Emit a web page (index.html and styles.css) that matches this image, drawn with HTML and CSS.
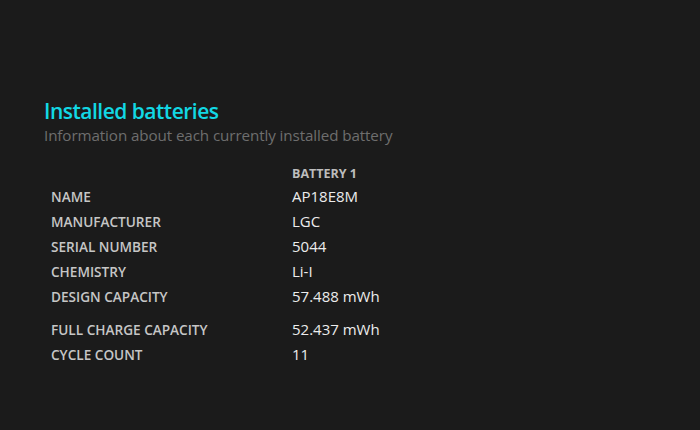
FILE: index.html
```html
<!DOCTYPE html>
<html>
<head>
<meta charset="utf-8">
<link rel="stylesheet" href="styles.css">
</head>
<body>
<main class="page">
  <h1 class="title">Installed batteries</h1>
  <p class="subtitle">Information about each currently installed battery</p>
  <table class="info">
    <thead>
      <tr class="head-row"><th class="corner"></th><th class="col-head">BATTERY 1</th></tr>
    </thead>
    <tbody>
      <tr><td class="label">NAME</td><td class="value">AP18E8M</td></tr>
      <tr><td class="label">MANUFACTURER</td><td class="value">LGC</td></tr>
      <tr><td class="label">SERIAL NUMBER</td><td class="value">5044</td></tr>
      <tr><td class="label">CHEMISTRY</td><td class="value">Li-I</td></tr>
      <tr><td class="label">DESIGN CAPACITY</td><td class="value">57.488 mWh</td></tr>
      <tr class="spaced"><td class="label">FULL CHARGE CAPACITY</td><td class="value">52.437 mWh</td></tr>
      <tr><td class="label">CYCLE COUNT</td><td class="value">11</td></tr>
    </tbody>
  </table>
</main>
</body>
</html>
```

FILE: styles.css
```css
html, body {
  margin: 0;
  padding: 0;
  background: #1b1b1b;
  height: 100%;
}
body {
  font-family: "Open Sans", "Noto Sans", sans-serif;
  color: #e6e6e6;
}
.page {
  padding: 97px 0 0 44px;
}
.title {
  margin: 0;
  font-size: 21px;
  font-weight: 600;
  color: #12d8e4;
  line-height: 28px;
  letter-spacing: -0.5px;
}
.subtitle {
  margin: 0;
  font-size: 15.2px;
  font-weight: 400;
  color: #6e6e6e;
  line-height: 20px;
  letter-spacing: -0.1px;
}
.info {
  border-collapse: collapse;
  margin-top: 18px;
}
.info th, .info td {
  padding: 0;
  text-align: left;
  vertical-align: middle;
  line-height: 20px;
}
.info td {
  vertical-align: baseline;
  line-height: 25px;
}
.corner {
  width: 241px;
  padding-left: 7px !important;
}
.head-row th {
  height: 21px;
}
.label {
  width: 241px;
  padding-left: 7px !important;
  font-size: 13.6px;
  font-weight: 600;
  color: #c6c6c6;
}
.col-head {
  font-size: 12.5px;
  font-weight: 700;
  color: #bdbdbd;
}
.value {
  font-size: 15px;
  color: #ececec;
}
.spaced td {
  padding-top: 8px;
}
```
